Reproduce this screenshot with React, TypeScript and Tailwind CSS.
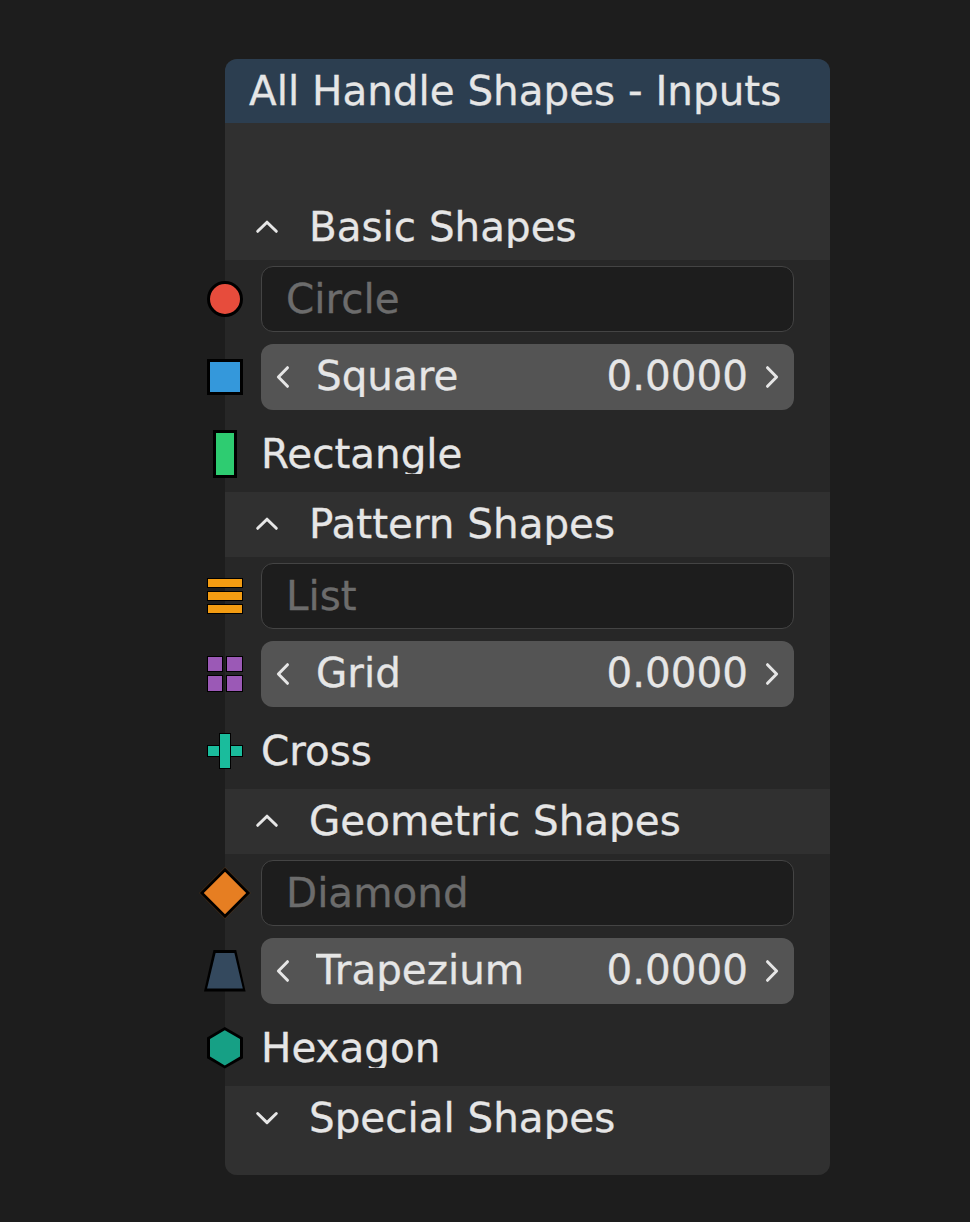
import type { ReactNode } from "react";

type Direction = "up" | "down" | "left" | "right";

const chevrons: Record<Direction, string> = {
  up: "M5.7 19.3 15 10.2 24.3 19.3",
  down: "M5.7 10.5 15 19.6 24.3 10.5",
  left: "M19.5 5.7 10.4 15 19.5 24.3",
  right: "M10.5 5.7 19.6 15 10.5 24.3",
};

function Chevron({ direction }: { direction: Direction }) {
  return (
    <svg width="30" height="30" viewBox="0 0 30 30" fill="none" className="shrink-0" aria-hidden="true">
      <path d={chevrons[direction]} stroke="#e6e6e6" strokeWidth="3" strokeLinecap="round" strokeLinejoin="round" />
    </svg>
  );
}

function Handle({ children }: { children: ReactNode }) {
  return (
    <div className="absolute top-1/2 -left-[66px] flex size-[60px] -translate-y-1/2 items-center justify-center">
      {children}
    </div>
  );
}

function Row({ handle, children }: { handle: ReactNode; children: ReactNode }) {
  return (
    <div className="relative">
      <Handle>{handle}</Handle>
      {children}
    </div>
  );
}

function TextField({ label }: { label: string }) {
  return (
    <div className="flex h-[66px] items-center rounded-xl border border-[#444444] bg-[#1d1d1d] px-6 text-[#6c6c6c]">
      {label}
    </div>
  );
}

function NumberField({ label }: { label: string }) {
  return (
    <div className="flex h-[66px] items-center rounded-xl bg-[#545454] px-[7px]">
      <Chevron direction="left" />
      <div className="mb-px flex flex-1 justify-between pr-[9px] pl-[18px] leading-[40px]">
        <span className="overflow-hidden pb-px">{label}</span>
        <span>0.0000</span>
      </div>
      <Chevron direction="right" />
    </div>
  );
}

function Label({ label }: { label: string }) {
  return (
    <div className="flex h-16 items-center">
      <span className="overflow-hidden leading-[40px]">{label}</span>
    </div>
  );
}

function SectionHeader({ title, open }: { title: string; open: boolean }) {
  return (
    <div className="flex h-[65px] items-center gap-[27px] bg-[#303030] pl-[27px]">
      <div className="mb-px flex">
        <Chevron direction={open ? "up" : "down"} />
      </div>
      <span className="overflow-hidden pb-px leading-[40px]">{title}</span>
    </div>
  );
}

interface SectionProps {
  title: string;
  labels: [string, string, string];
  handles: [ReactNode, ReactNode, ReactNode];
}

function Section({ title, labels, handles }: SectionProps) {
  return (
    <section>
      <SectionHeader title={title} open />
      <div className="flex h-[232px] flex-col gap-3 px-9 pt-1.5">
        <Row handle={handles[0]}>
          <TextField label={labels[0]} />
        </Row>
        <Row handle={handles[1]}>
          <NumberField label={labels[1]} />
        </Row>
        <Row handle={handles[2]}>
          <Label label={labels[2]} />
        </Row>
      </div>
    </section>
  );
}

const circle = <div className="size-9 rounded-full border-3 border-black bg-[#e74c3c]" />;
const square = <div className="size-9 border-3 border-black bg-[#3498db]" />;
const rectangle = <div className="h-12 w-6 border-3 border-black bg-[#2ecc71]" />;

const list = (
  <div className="flex h-9 w-9 flex-col gap-[3px]">
    <div className="flex-1 border border-black bg-[#f39c12]" />
    <div className="flex-1 border border-black bg-[#f39c12]" />
    <div className="flex-1 border border-black bg-[#f39c12]" />
  </div>
);

const grid = (
  <div className="grid size-9 grid-cols-[16px_17px] grid-rows-[16px_17px] gap-[3px]">
    <div className="border border-black bg-[#9b59b6]" />
    <div className="border border-black bg-[#9b59b6]" />
    <div className="border border-black bg-[#9b59b6]" />
    <div className="border border-black bg-[#9b59b6]" />
  </div>
);

const cross = (
  <svg width="36" height="36" viewBox="0 0 36 36" fill="#1abc9c" stroke="#000000">
    <rect x="0.5" y="12.5" width="35" height="11" />
    <rect x="12.5" y="0.5" width="11" height="35" />
  </svg>
);

const diamond = <div className="size-9 rotate-45 border-3 border-black bg-[#e67e22]" />;

const trapezium = (
  <svg width="60" height="60" viewBox="0 0 60 60">
    <path d="M18.5 9H41.2L50.6 50.5H9Z" fill="#000000" />
    <path d="M20.6 12H39.4L47.8 47.5H12.1Z" fill="#34495e" />
  </svg>
);

const hexagon = (
  <svg width="60" height="60" viewBox="0 0 60 60">
    <path d="M29.8 9 48 19.4V40.2L29.8 50.6 12 40.2V19.4Z" fill="#000000" />
    <path d="M29.8 12.2 45 21V38.6L29.8 47.6 15 38.6V21Z" fill="#16a085" />
  </svg>
);

export default function App() {
  return (
    <main className="h-[1222px] bg-[#1d1d1d] pt-[59px] pl-[225px] font-['DejaVu_Sans',sans-serif] text-[40.45px] leading-[60px] whitespace-nowrap text-[#e6e6e6] [-webkit-text-stroke:0.3px_currentColor]">
      <article className="h-[1116px] w-[605px] rounded-xl bg-[#272727]">
        <header className="flex h-16 items-center rounded-t-xl bg-[#2c3e50] pl-6">All Handle Shapes - Inputs</header>
        <div className="h-[72px] bg-[#303030]" />
        <Section
          title="Basic Shapes"
          labels={["Circle", "Square", "Rectangle"]}
          handles={[circle, square, rectangle]}
        />
        <Section title="Pattern Shapes" labels={["List", "Grid", "Cross"]} handles={[list, grid, cross]} />
        <Section
          title="Geometric Shapes"
          labels={["Diamond", "Trapezium", "Hexagon"]}
          handles={[diamond, trapezium, hexagon]}
        />
        <div className="rounded-b-xl bg-[#303030] pb-6">
          <SectionHeader title="Special Shapes" open={false} />
        </div>
      </article>
    </main>
  );
}
